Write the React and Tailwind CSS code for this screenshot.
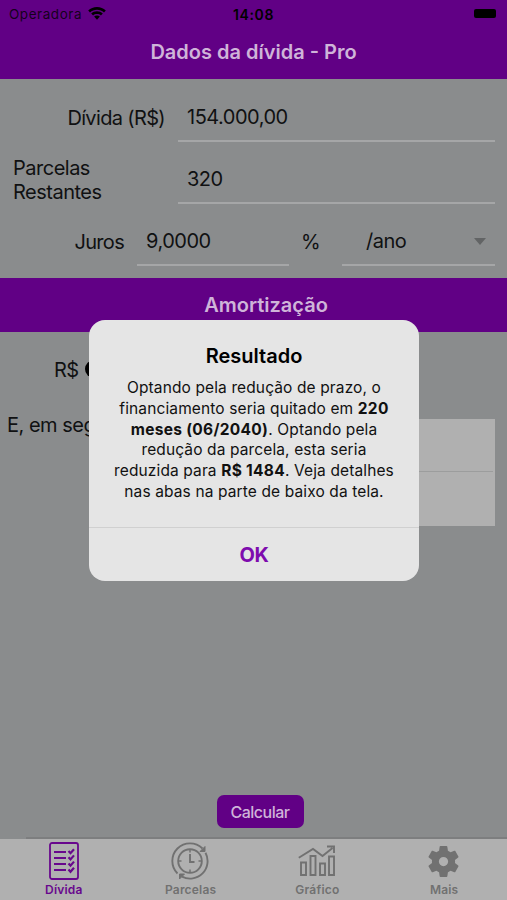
function StatusBar() {
  return (
    <div className="flex h-7 items-center justify-between text-black">
      <div className="flex w-40 items-center gap-[6px] pl-[9px]">
        <span className="text-[13.5px] tracking-[0.55px] text-black/80">Operadora</span>
        <svg width="18" height="14" viewBox="0 0 18 14" fill="currentColor">
          <path d="M9 0C5.600 0 2.500 1.300.2 3.500l1.800 1.900C3.900 3.700 6.300 2.700 9 2.700s5.100 1 7 2.700l1.800-1.900C15.500 1.300 12.400 0 9 0z" />
          <path d="M9 4.300c-2.200 0-4.200.8-5.800 2.200l1.900 1.900C6.100 7.500 7.500 7 9 7s2.900.5 3.900 1.400l1.900-1.900C13.200 5.100 11.200 4.300 9 4.300z" />
          <path d="M9 8.500c-1.100 0-2.100.4-2.900 1.100L9 12.700l2.900-3.100C11.100 8.900 10.100 8.500 9 8.500z" />
        </svg>
      </div>
      <span className="text-[14px] font-semibold tracking-[0.6px]">14:08</span>
      <div className="flex w-40 justify-end pr-[11px]">
        <div className="mb-[2px] h-[9px] w-[22px] rounded-[2px] bg-black"></div>
      </div>
    </div>
  );
}

function DebtForm() {
  return (
    <div className="h-[199px] text-[20px] tracking-[-0.5px] text-[#101112]">
      <div className="flex h-[63px] pr-3">
        <div className="flex w-[165px] items-center justify-end pt-[15px] tracking-[-0.65px]">Dívida (R$)</div>
        <div className="ml-[13px] flex flex-1 items-center border-b-2 border-[#a5a6a7] pt-[15px] pl-[9px]">154.000,00</div>
      </div>
      <div className="flex h-[62px] pr-3">
        <div className="flex w-[165px] items-center pt-[13px] pl-[13px] leading-6">Parcelas<br />Restantes</div>
        <div className="ml-[13px] flex flex-1 items-center border-b-2 border-[#a5a6a7] pt-[13px] pl-[9px]">320</div>
      </div>
      <div className="flex h-[62px] pr-3">
        <div className="flex w-[124px] items-center justify-end pt-[14px] tracking-[-0.7px]">Juros</div>
        <div className="ml-[13px] flex w-[152px] items-center border-b-2 border-[#a5a6a7] pt-[14px] pl-[9px]">9,0000</div>
        <div className="flex w-[53px] items-center pt-[14px] pl-3">%</div>
        <div className="flex flex-1 items-center justify-between border-b-2 border-[#a5a6a7] pt-[14px] pr-[9px] pl-6">
          <span>/ano</span>
          <svg width="12" height="7" viewBox="0 0 12 7" fill="#626465">
            <path d="M0 0h12L6 7z" />
          </svg>
        </div>
      </div>
    </div>
  );
}

function ListIcon() {
  return (
    <svg className="ml-px" width="30" height="38" viewBox="0 0 30 38" fill="none" stroke="currentColor" strokeWidth="1.8">
      <rect x="1" y="1" width="28" height="36" rx="2" />
      <path d="M5 10h12M5 16h12M5 22h12M5 28h12" strokeWidth="1.9" />
      <path d="M19.500 9l2 2.200L25 7.200M19.500 15.200l2 2.200 3.500-4M19.500 21.400l2 2.200 3.500-4M19.500 27.600l2 2.200 3.500-4" strokeWidth="2.2" />
    </svg>
  );
}

function ClockIcon() {
  return (
    <svg width="38" height="38" viewBox="0 0 38 38" fill="none" stroke="currentColor" strokeWidth="1.9">
      <circle cx="19" cy="19" r="11.8" />
      <path d="M19 12v8h4.500" />
      <path d="M19 7.500v3M19 27.500v3M7.500 19h3M27.500 19h3" strokeWidth="1.5" />
      <path d="M6.500 31.500A17.500 17.500 0 0 1 31.500 6.500" />
      <path d="M34.500 10.800A17.500 17.500 0 0 1 11 34.600" />
      <path d="M34 4.500v5h-5zM8.500 37v-5h5z" fill="currentColor" strokeWidth="1" />
    </svg>
  );
}

function ChartIcon() {
  return (
    <svg width="38" height="32" viewBox="0 0 38 32" fill="none" stroke="currentColor" strokeWidth="1.9">
      <path d="M3 17.500h5V30H3zM12.500 11h5v19h-5zM22 18.500h5V30h-5zM31 11.500h5V30h-5z" />
      <path d="M.8 12.800L15 4l9.500 7L34.500 3M29 1.500h7v6.500" />
    </svg>
  );
}

function GearIcon() {
  return (
    <svg width="37" height="37" viewBox="0 0 24 24" fill="currentColor">
      <path d="M19.430 12.980c.040-.320.070-.640.070-.980s-.030-.660-.070-.980l2.110-1.650c.190-.150.240-.420.120-.640l-2-3.460c-.120-.220-.390-.300-.610-.220l-2.490 1c-.520-.400-1.080-.730-1.690-.980l-.380-2.650C14.460 2.180 14.250 2 14 2h-4c-.250 0-.460.180-.490.420l-.380 2.650c-.610.250-1.170.590-1.690.980l-2.490-1c-.230-.090-.490 0-.610.220l-2 3.460c-.130.220-.070.490.120.640l2.110 1.650c-.040.320-.070.650-.070.980s.030.660.070.980l-2.110 1.650c-.190.150-.240.420-.120.640l2 3.460c.120.220.390.300.610.220l2.490-1c.520.400 1.080.730 1.690.980l.380 2.650c.030.240.240.420.490.420h4c.250 0 .460-.180.490-.420l.380-2.650c.610-.250 1.170-.590 1.690-.980l2.490 1c.230.090.490 0 .610-.220l2-3.460c.120-.220.070-.490-.120-.640l-2.110-1.650zM12 15a3 3 0 1 1 0-6 3 3 0 0 1 0 6z" />
    </svg>
  );
}

const tabs = [
  { label: 'Dívida', icon: ListIcon, active: true },
  { label: 'Parcelas', icon: ClockIcon },
  { label: 'Gráfico', icon: ChartIcon },
  { label: 'Mais', icon: GearIcon },
];

function TabBar() {
  return (
    <nav className="h-[63px]">
      <div className="ml-[26px] h-[2px] bg-[#7d7e7f]"></div>
      <div className="flex h-[61px] items-start bg-[#b0b0b0]">
        {tabs.map(({ label, icon: Icon, active }) => (
          <button key={label} className={`flex flex-1 flex-col items-center pt-[2px] ${active ? 'text-[#68078d]' : 'text-[#717171]'}`}>
            <span className="flex h-10 items-center">
              <Icon />
            </span>
            <span className="pl-px text-[12px] leading-[17px] font-semibold tracking-[0.2px]">{label}</span>
          </button>
        ))}
      </div>
    </nav>
  );
}

function ResultDialog() {
  return (
    <div className="absolute top-[320px] left-[89px] flex h-[261px] w-[330px] flex-col rounded-[16px] bg-[#e5e5e5] text-center text-black">
      <div className="h-[207px] pt-[23px]">
        <h2 className="text-[20px] leading-[26px] font-semibold">Resultado</h2>
        <p className="mt-[9px] text-[15.5px] leading-[20.8px] tracking-[0.12px] whitespace-nowrap text-[#111]">
          Optando pela redução de prazo, o<br />
          financiamento seria quitado em <b className="tracking-[0.3px]">220</b><br />
          <b className="tracking-[0.3px]">meses (06/2040)</b>. Optando pela<br />
          redução da parcela, esta seria<br />
          reduzida para <b className="tracking-[0.3px]">R$ 1484</b>. Veja detalhes<br />
          nas abas na parte de baixo da tela.
        </p>
      </div>
      <button className="flex-1 border-t border-[#d0d0d0] text-[20px] font-bold tracking-[-0.3px] text-[#7e0cae]">OK</button>
    </div>
  );
}

export default function App() {
  return (
    <div className="relative flex h-[900px] w-[507px] flex-col overflow-hidden bg-[#8a8c8d] font-['Inter','Liberation_Sans',sans-serif]">
      <header className="h-[79px] bg-[#610085]">
        <StatusBar />
        <h1 className="text-center text-[20px] leading-[48px] font-semibold text-[#cfb4d9]">Dados da dívida - Pro</h1>
      </header>

      <DebtForm />

      <h2 className="h-[54px] bg-[#610085] pl-[25px] text-center text-[20px] leading-[54px] font-semibold text-[#cfb4d9]">Amortização</h2>

      <div className="h-[87px] text-[20px] tracking-[-0.5px] text-[#101112]">
        <div className="flex h-[76px] items-center gap-[6px] pl-[54px]">
          R$
          <span className="mb-[3px] h-[18px] w-[18px] rounded-full bg-black"></span>
        </div>
      </div>
      <div className="flex justify-between pr-3 pl-[7px] text-[20px] tracking-[-0.5px] text-[#101112]">
        <span className="-mt-[9px]">E, em seg</span>
        <div className="h-[107px] w-[241px] bg-[#b0b0b0] pr-[2px]">
          <div className="h-[53px] border-b border-[#9c9d9d]"></div>
        </div>
      </div>

      <div className="flex flex-1 items-end justify-center pb-[9px] pl-[13px]">
        <button className="h-[33px] w-[87px] rounded-[7px] bg-[#610085] text-[16px] font-medium tracking-[-0.5px] text-[#cfb4d9]">Calcular</button>
      </div>

      <TabBar />
      <ResultDialog />
    </div>
  );
}
